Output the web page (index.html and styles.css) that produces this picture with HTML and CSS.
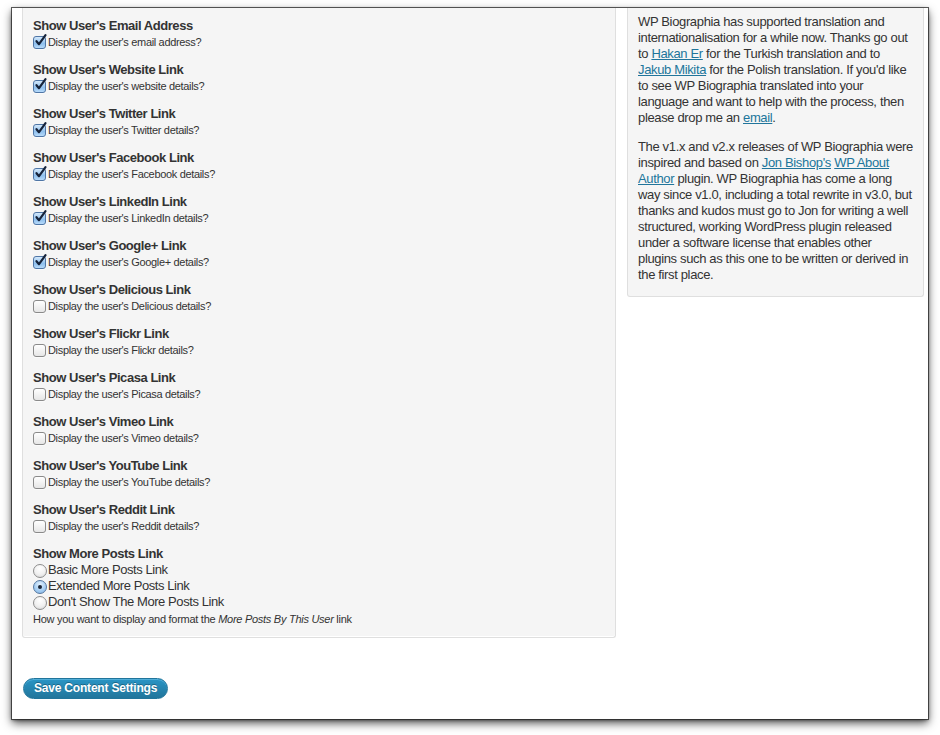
FILE: index.html
```html
<!DOCTYPE html>
<html>
<head>
<meta charset="utf-8">
<link rel="stylesheet" href="styles.css">
</head>
<body>
<div class="stage">
  <div class="window">
    <div class="columns">
      <div class="main">
        <div class="panel">
          <div class="opt"><div class="opt-title">Show User's Email Address</div><label class="chk"><span class="cb on"><svg viewBox="0 0 14 14" width="14" height="14"><path d="M3.5 7.2 L6 10.2 L12.5 1.2" /></svg></span>Display the user's email address?</label></div>
          <div class="opt"><div class="opt-title">Show User's Website Link</div><label class="chk"><span class="cb on"><svg viewBox="0 0 14 14" width="14" height="14"><path d="M3.5 7.2 L6 10.2 L12.5 1.2" /></svg></span>Display the user's website details?</label></div>
          <div class="opt"><div class="opt-title">Show User's Twitter Link</div><label class="chk"><span class="cb on"><svg viewBox="0 0 14 14" width="14" height="14"><path d="M3.5 7.2 L6 10.2 L12.5 1.2" /></svg></span>Display the user's Twitter details?</label></div>
          <div class="opt"><div class="opt-title">Show User's Facebook Link</div><label class="chk"><span class="cb on"><svg viewBox="0 0 14 14" width="14" height="14"><path d="M3.5 7.2 L6 10.2 L12.5 1.2" /></svg></span>Display the user's Facebook details?</label></div>
          <div class="opt"><div class="opt-title">Show User's LinkedIn Link</div><label class="chk"><span class="cb on"><svg viewBox="0 0 14 14" width="14" height="14"><path d="M3.5 7.2 L6 10.2 L12.5 1.2" /></svg></span>Display the user's LinkedIn details?</label></div>
          <div class="opt"><div class="opt-title">Show User's Google+ Link</div><label class="chk"><span class="cb on"><svg viewBox="0 0 14 14" width="14" height="14"><path d="M3.5 7.2 L6 10.2 L12.5 1.2" /></svg></span>Display the user's Google+ details?</label></div>
          <div class="opt"><div class="opt-title">Show User's Delicious Link</div><label class="chk"><span class="cb"></span>Display the user's Delicious details?</label></div>
          <div class="opt"><div class="opt-title">Show User's Flickr Link</div><label class="chk"><span class="cb"></span>Display the user's Flickr details?</label></div>
          <div class="opt"><div class="opt-title">Show User's Picasa Link</div><label class="chk"><span class="cb"></span>Display the user's Picasa details?</label></div>
          <div class="opt"><div class="opt-title">Show User's Vimeo Link</div><label class="chk"><span class="cb"></span>Display the user's Vimeo details?</label></div>
          <div class="opt"><div class="opt-title">Show User's YouTube Link</div><label class="chk"><span class="cb"></span>Display the user's YouTube details?</label></div>
          <div class="opt"><div class="opt-title">Show User's Reddit Link</div><label class="chk"><span class="cb"></span>Display the user's Reddit details?</label></div>
          <div class="opt last">
            <div class="opt-title">Show More Posts Link</div>
            <label class="rad"><span class="rb"></span>Basic More Posts Link</label>
            <label class="rad"><span class="rb on"></span>Extended More Posts Link</label>
            <label class="rad"><span class="rb"></span>Don't Show The More Posts Link</label>
            <div class="note">How you want to display and format the <em>More Posts By This User</em> link</div>
          </div>
        </div>
        <button class="save">Save Content Settings</button>
      </div>
      <div class="side">
        <p>WP Biographia has supported translation and internationalisation for a while now. Thanks go out to <a href="#">Hakan Er</a> for the Turkish translation and to <a href="#">Jakub Mikita</a> for the Polish translation. If you'd like to see WP Biographia translated into your language and want to help with the process, then please drop me an <a href="#">email</a>.</p>
        <p>The v1.x and v2.x releases of WP Biographia were inspired and based on <a href="#">Jon Bishop's</a> <a href="#">WP About Author</a> plugin. WP Biographia has come a long way since v1.0, including a total rewrite in v3.0, but thanks and kudos must go to Jon for writing a well structured, working WordPress plugin released under a software license that enables other plugins such as this one to be written or derived in the first place.</p>
      </div>
    </div>
  </div>
</div>
</body>
</html>
```
FILE: styles.css
```css
html, body {
  margin: 0;
  padding: 0;
  background: #ffffff;
}
body {
  font-family: "Liberation Sans", Arial, Helvetica, sans-serif;
  color: #333333;
}
.stage {
  width: 940px;
  height: 735px;
  padding: 8px 0 0 12px;
  box-sizing: border-box;
}
.window {
  width: 916px;
  height: 711px;
  background: #ffffff;
  overflow: hidden;
  box-shadow: 0 0 0 1px rgba(40, 40, 40, 0.75), 0 4px 9px rgba(0, 0, 0, 0.7), 0 1px 3px rgba(0, 0, 0, 0.5);
}
.columns {
  display: flex;
  align-items: flex-start;
  gap: 11px;
  padding: 0 0 0 10px;
}
.main {
  width: 594px;
  flex: none;
}
.panel {
  background: #f5f5f5;
  border: 1px solid #dfdfdf;
  border-top: none;
  border-radius: 0 0 3px 3px;
  padding: 10px 10px 10px;
  box-shadow: inset 0 -1px 0 #ffffff;
}
.opt {
  margin-bottom: 12px;
}
.opt.last {
  margin-bottom: 0;
}
.opt-title {
  font-weight: bold;
  font-size: 13px;
  line-height: 16px;
  letter-spacing: -0.45px;
  color: #333;
}
.chk {
  display: flex;
  align-items: center;
  height: 16px;
  font-size: 11px;
  letter-spacing: -0.33px;
  color: #333;
}
.cb {
  position: relative;
  width: 11px;
  height: 11px;
  border: 1px solid #8a8a8a;
  border-radius: 3px;
  background: linear-gradient(#ffffff, #e6e6e6);
  margin-right: 2px;
  flex: none;
  box-shadow: 0 1px 0 rgba(255,255,255,0.6);
}
.cb.on {
  border-color: #4f76a6;
  background: linear-gradient(#d3e8fb, #8fc0ee 60%, #b7dafa);
}
.cb svg {
  position: absolute;
  left: -1px;
  top: -3px;
  overflow: visible;
}
.cb svg path {
  fill: none;
  stroke: #16233a;
  stroke-width: 2.2;
  stroke-linecap: round;
  stroke-linejoin: round;
}
.rad {
  display: flex;
  align-items: center;
  height: 16px;
  line-height: 16px;
  font-size: 13px;
  letter-spacing: -0.43px;
  color: #333;
}
.rad:first-of-type {
  margin-top: 0;
}
.rb {
  position: relative;
  width: 12px;
  height: 12px;
  border: 1px solid #8d8d8d;
  border-radius: 50%;
  background: radial-gradient(circle at 50% 30%, #ffffff, #f0f0f0 55%, #d4d4d4);
  margin: 2px 1px 0 0;
  flex: none;
  box-sizing: content-box;
}
.rb.on {
  border-color: #55779f;
  background: radial-gradient(circle at 50% 30%, #e2f0fc, #a8cff3 55%, #7fb3e6);
}
.rb.on::after {
  content: "";
  position: absolute;
  left: 4px;
  top: 4px;
  width: 4px;
  height: 4px;
  border-radius: 50%;
  background: #1a2638;
}
.note {
  font-size: 11px;
  line-height: 16px;
  letter-spacing: -0.27px;
  margin-top: 1px;
  color: #333;
}
.note em {
  font-style: italic;
}
.save {
  display: block;
  margin: 40px 0 0 1px;
  height: 21px;
  padding: 0 10px;
  border: 1px solid #21759b;
  border-radius: 11px;
  background: linear-gradient(#2a95c5, #21759b);
  color: #ffffff;
  font-family: "Liberation Sans", Arial, sans-serif;
  font-weight: bold;
  font-size: 12px;
  letter-spacing: -0.2px;
  line-height: 19px;
  text-shadow: 0 -1px 0 rgba(0, 0, 0, 0.3);
  box-shadow: inset 0 1px 0 rgba(120, 200, 237, 0.5);
}
.side {
  width: 275px;
  flex: none;
  background: #f5f5f5;
  border: 1px solid #dfdfdf;
  border-top: none;
  border-radius: 0 0 3px 3px;
  padding: 6px 10px 0;
  font-size: 13px;
  line-height: 16px;
  letter-spacing: -0.35px;
  color: #333;
}
.side p {
  margin: 0 0 13px;
}
.side a {
  color: #21759b;
  text-decoration: underline;
}
```
